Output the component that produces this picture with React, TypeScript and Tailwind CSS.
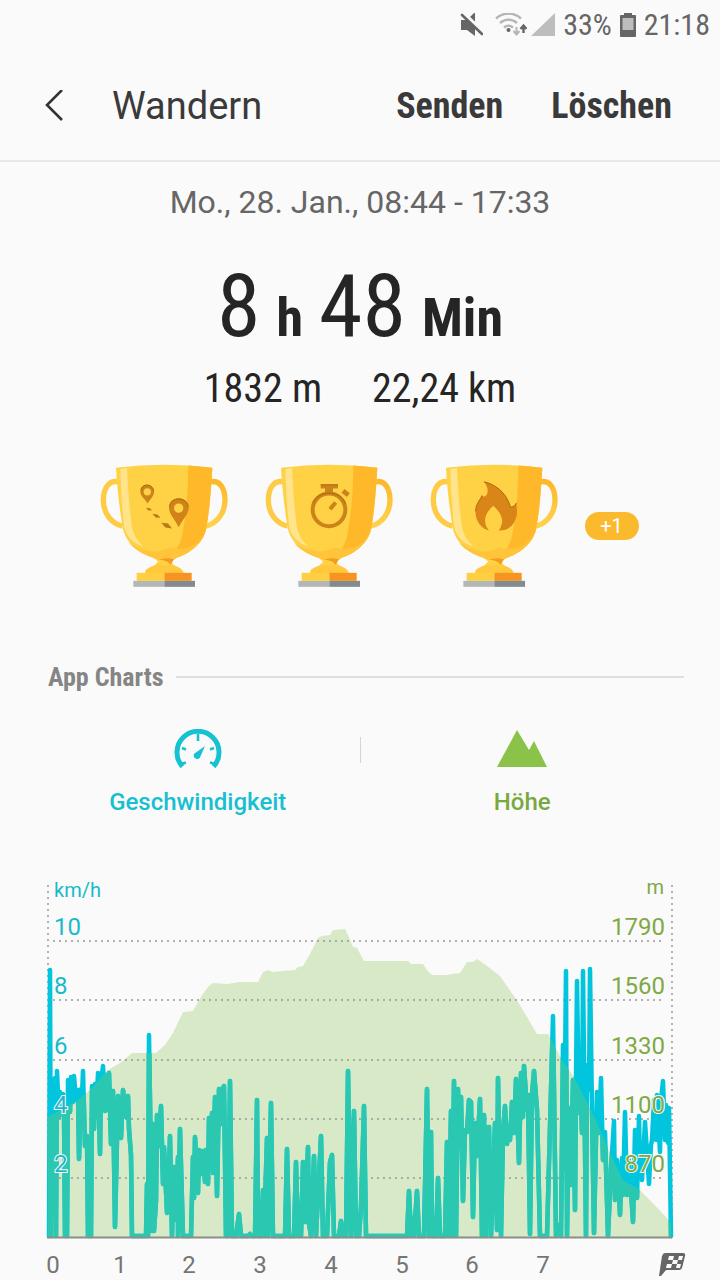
import type { ReactNode } from 'react';

type Point = [number, number];

const CHART_WIDTH = 720;
const CHART_HEIGHT = 410;
const BASELINE = 367;

const elevation: Point[] = [
  [48, 247], [60, 240], [78, 230], [90, 220], [108, 200], [120, 193], [132, 183], [156, 183],
  [165, 175], [173, 163], [183, 142], [193, 141], [202, 125], [209, 116], [213, 113], [227, 114],
  [240, 112], [258, 112], [263, 102], [268, 100], [272, 102], [283, 101], [295, 100], [298, 97],
  [303, 96], [310, 84], [318, 68], [322, 66], [330, 65], [333, 60], [345, 59], [348, 65],
  [353, 77], [357, 78], [364, 91], [408, 91], [411, 94], [423, 94], [427, 100], [432, 105],
  [447, 105], [452, 104], [460, 103], [467, 92], [473, 92], [477, 89], [483, 93], [500, 106],
  [520, 135], [537, 164], [548, 164], [562, 190], [572, 204], [575, 209], [595, 248], [610, 283],
  [623, 310], [640, 320], [667, 348], [671, 353],
];

const speed: Point[] = [
  [49, 366], [50, 100], [51, 366], [52, 210], [53, 232], [55, 208], [56, 366], [57, 201],
  [59, 247], [60, 222], [61, 240], [63, 224], [64, 240], [65, 366], [67, 366], [68, 210], [70, 242],
  [71, 207], [73, 232], [74, 206], [76, 230], [78, 220], [79, 289], [81, 219], [82, 226],
  [83, 201], [85, 276], [87, 266], [88, 366], [91, 366], [92, 216], [94, 259], [95, 214],
  [96, 248], [98, 203], [100, 284], [101, 212], [103, 196], [105, 241], [106, 205], [107, 240],
  [109, 203], [111, 274], [113, 221], [115, 357], [118, 226], [121, 268], [123, 220], [126, 247],
  [128, 226], [129, 259], [131, 285], [132, 366], [146, 366], [147, 314], [148, 366], [149, 165],
  [152, 361], [153, 254], [154, 361], [156, 331], [157, 245], [159, 276], [161, 236], [163, 314],
  [164, 277], [167, 343], [169, 300], [170, 266], [172, 366], [174, 297], [176, 350], [178, 287],
  [178, 366], [180, 259], [183, 366], [191, 366], [193, 287], [194, 328], [195, 267], [198, 323],
  [199, 280], [201, 304], [203, 281], [205, 312], [206, 280], [208, 314], [209, 248], [211, 282],
  [212, 243], [213, 303], [215, 227], [217, 326], [219, 219], [221, 254], [222, 220], [224, 216],
  [226, 366], [228, 366], [230, 211], [232, 366], [236, 366], [239, 344], [241, 366], [248, 366],
  [250, 364], [252, 366], [255, 366], [257, 230], [258, 366], [261, 366], [263, 320], [264, 366],
  [267, 268], [268, 366], [271, 233], [273, 366], [285, 366], [287, 279], [289, 366], [294, 366],
  [296, 292], [298, 366], [300, 345], [301, 366], [303, 292], [305, 352], [308, 277], [309, 354],
  [311, 366], [314, 286], [316, 366], [321, 266], [323, 366], [327, 366], [330, 292], [332, 285],
  [334, 366], [339, 366], [341, 351], [343, 366], [345, 358], [346, 366], [348, 201], [351, 366],
  [354, 241], [356, 366], [359, 366], [361, 337], [364, 236], [366, 366], [407, 366], [409, 321],
  [411, 366], [413, 348], [414, 366], [417, 321], [419, 366], [424, 366], [427, 219], [429, 366],
  [431, 262], [432, 366], [436, 366], [438, 308], [440, 366], [445, 366], [447, 272], [449, 366],
  [451, 241], [452, 366], [454, 211], [456, 366], [458, 219], [459, 260], [461, 227], [463, 331],
  [465, 260], [467, 262], [469, 230], [471, 232], [473, 347], [475, 253], [477, 286], [480, 229],
  [482, 366], [484, 245], [486, 366], [487, 258], [489, 257], [491, 366], [493, 315], [495, 253],
  [497, 360], [498, 208], [501, 366], [503, 262], [505, 236], [507, 274], [508, 258], [510, 270],
  [512, 232], [514, 263], [516, 209], [519, 293], [521, 203], [523, 247], [524, 196], [527, 240],
  [528, 225], [530, 364], [532, 225], [534, 201], [537, 240], [540, 366], [547, 366], [551, 220],
  [553, 146], [556, 366], [559, 355], [561, 366], [563, 175], [564, 300], [566, 101], [567, 366],
  [569, 238], [571, 315], [573, 210], [575, 340], [576, 210], [577, 111], [579, 243], [580, 210],
  [582, 263], [583, 101], [586, 366], [587, 195], [589, 220], [590, 99], [592, 240], [594, 363],
  [597, 222], [599, 263], [601, 208], [603, 290], [605, 262], [608, 366], [611, 300], [614, 251],
  [615, 330], [617, 290], [620, 345], [622, 288], [623, 325], [625, 242], [627, 325], [629, 290],
  [631, 320], [633, 352], [635, 260], [637, 328], [639, 246], [640, 300], [642, 310], [645, 252],
  [649, 314], [651, 275], [652, 270], [654, 230], [656, 270], [657, 225], [659, 265], [660, 282],
  [661, 230], [663, 211], [665, 270], [666, 235], [668, 273], [669, 238], [671, 366],
];

const gridRows = [
  { y: 71, speed: '10', height: '1790' },
  { y: 130, speed: '8', height: '1560' },
  { y: 190, speed: '6', height: '1330' },
  { y: 249, speed: '4', height: '1100' },
  { y: 308, speed: '2', height: '870' },
];

const hours: Point[] = [[53, 0], [120, 1], [189, 2], [260, 3], [331, 4], [402, 5], [472, 6], [543, 7]];

const toPath = (points: Point[]) => 'M' + points.map((p) => p.join(' ')).join('L');

function StatusBar() {
  return (
    <div className="flex h-[50px] items-center justify-end pr-[10px] font-['Roboto_Condensed',Roboto,sans-serif] text-[30px] leading-none text-[#666]">
      <svg className="mr-3 h-6 w-6" viewBox="0 0 24 24">
        <path d="M2 7h6l8-8v24l-8-6H2z" fill="#666" />
        <path d="M1 -3L24 19" stroke="#fafafa" strokeWidth="4" />
        <path d="M3 2L23 21" stroke="#666" strokeWidth="2.6" strokeLinecap="round" />
      </svg>
      <svg className="mr-1 h-6 w-8" viewBox="0 0 32 24" fill="none">
        <path d="M1 5.500C8 -1 19 -1 26 5.500M5 10C10 5.500 17 5.500 22 10M9 14.500C12 12 15 12 18 14.500" stroke="#b5b5b5" strokeWidth="2.400" />
        <circle cx="13.500" cy="17" r="2" fill="#666" />
        <path d="M21.500 14v7M18.500 18l3 3.500 3-3.500" stroke="#b5b5b5" strokeWidth="2" />
        <path d="M28.500 20v-7M25.500 16l3-3.500 3 3.500" stroke="#666" strokeWidth="2.400" />
      </svg>
      <svg className="mr-2 h-6 w-6" viewBox="0 0 24 24">
        <path d="M24 0v23H0z" fill="#bdbdbd" />
      </svg>
      <span>33%</span>
      <svg className="mx-2 h-6 w-4" viewBox="0 0 16 24">
        <path d="M4 0h8v2h3q1 0 1 1v20q0 1-1 1H1q-1 0-1-1V3q0-1 1-1h3z" fill="#666" />
        <path d="M2.500 5h11v12h-11z" fill="#bdbdbd" />
      </svg>
      <span>21:18</span>
    </div>
  );
}

function Trophy({ id, label, children }: { id: string; label: string; children: ReactNode }) {
  return (
    <svg className="h-[125px] w-32" viewBox="28 40 384 374" role="img" aria-label={label}>
      <defs>
        <linearGradient id={id} x1="0" y1="0" x2="0" y2="1">
          <stop offset="0" stopColor="#fdb72b" />
          <stop offset="1" stopColor="#ffd24d" />
        </linearGradient>
      </defs>
      <path d="M84 96C54 90 38 116 38 151C38 190 62 222 96 229" fill="none" stroke="#fecb45" strokeWidth="16" />
      <path d="M358 96C388 90 403 116 403 151C403 190 378 222 345 229" fill="none" stroke={`url(#${id})`} strokeWidth="16" />
      <path d="M76 54Q220 35 365 54C361 120 357 180 347 234C340 278 300 310 258 324L242 334Q243 345 274 360V370H165V360Q197 347 202 334L188 324C145 310 105 280 96 234C87 180 80 120 76 54Z" fill="#ffd145" />
      <path d="M293 47Q330 49 365 54C361 120 357 180 347 234C340 278 300 310 258 324L242 334L240 345Q230 330 200 329C250 320 272 290 278 235C290 170 292 110 293 47Z" fill="#ffb829" />
      <path d="M347 234C340 278 300 310 258 324L240 332Q210 333 188 324C155 313 130 298 115 278C150 304 200 315 236 293C310 309 338 268 347 234Z" fill="#ffc43a" />
      <path d="M205 330Q225 322 250 328L240 345Q228 330 205 330Z" fill="#f39c22" />
      <path d="M89 58L109 54C112 120 117 185 124 233C130 260 143 275 158 291C130 281 108 262 101 234C94 180 91 120 89 58Z" fill="#ffe48c" />
      <path d="M163 369C168 350 190 348 200 346H242C262 348 276 358 280 369Z" fill="#ffc83d" />
      <path d="M138 369H221V393H138Z" fill="#ffcf3f" />
      <path d="M221 369H303V393H221Z" fill="#f7931e" />
      <path d="M128 393H221V411H128Z" fill="#b3b8b6" />
      <path d="M221 393H313V411H221Z" fill="#838b8d" />
      {children}
    </svg>
  );
}

function RouteMark() {
  return (
    <g>
      <path fillRule="evenodd" d="M170 105C156 105 149 115 149 126C149 139 162 147 171 161C180 147 190 139 190 126C190 115 182 105 170 105ZM170 115A11 11 0 1 0 170 137A11 11 0 1 0 170 115Z" fill="#c98518" />
      <path fillRule="evenodd" d="M264 145C246 145 235 158 235 174C235 192 253 209 264 232C276 209 294 192 294 174C294 158 282 145 264 145ZM264 161A14 14 0 1 0 264 189A14 14 0 1 0 264 161Z" fill="#cf8318" />
      <path d="M151 121C153 100 185 100 189 123M237 170C239 141 288 139 293 170" fill="none" stroke="#a96b12" strokeWidth="3" />
      <path d="M166 174L178 175L184 182L172 181ZM185 192L200 194L210 204L195 203ZM212 219L232 221L244 236L224 233Z" fill="#b87a18" />
    </g>
  );
}

function StopwatchMark() {
  return (
    <g fill="none" stroke="#cc841a">
      <circle cx="220" cy="180" r="49" strokeWidth="12" />
      <path d="M195 110H247" strokeWidth="12" />
      <path d="M220 114V130" strokeWidth="24" />
      <path d="M262 123L278 136" strokeWidth="14" />
      <path d="M223 178L240 158" strokeWidth="12" />
      <path d="M195 105H247M172 160C184 122 256 118 269 162" stroke="#a96b12" strokeWidth="3" />
    </g>
  );
}

function FlameMark() {
  return (
    <g>
      <path d="M190 96C220 102 257 125 270 173Q283 171 288 159C287 180 293 190 283 212C275 232 257 243 235 242C248 218 252 200 218 168C188 194 187 220 205 242C181 237 163 212 165 184C167 158 181 147 184 136C190 145 199 139 201 126C202 114 196 105 190 96Z" fill="#d98518" />
      <path d="M190 96C220 102 257 125 270 173Q283 171 288 159M184 137C181 149 165 159 165 185" fill="none" stroke="#a96b12" strokeWidth="3" />
    </g>
  );
}

function ActivityChart() {
  const area = `${toPath(elevation)}L671 ${BASELINE}L48 ${BASELINE}Z`;
  const line = toPath(speed);

  return (
    <svg
      className="mt-[52px] block w-full font-[Roboto,sans-serif]"
      viewBox={`0 0 ${CHART_WIDTH} ${CHART_HEIGHT}`}
      role="img"
      aria-label="Geschwindigkeit, Höhe"
    >
      <defs>
        <clipPath id="below-elevation">
          <path d={area} />
        </clipPath>
      </defs>

      <path d={area} fill="#d7e9c6" />

      {/* grid */}
      <g stroke="#999" strokeWidth="2" strokeLinecap="round" strokeDasharray="0 6">
        {gridRows.map((row) => (
          <path key={row.y} d={`M54 ${row.y}H662`} />
        ))}
        <path d="M48 16V366M672 16V366" />
      </g>

      {/* speed turns teal where it runs in front of the elevation */}
      <g fill="none" strokeWidth="4.5" strokeLinejoin="round" strokeLinecap="round">
        <path d={line} stroke="#00c5dc" />
        <path d={line} stroke="#2bc8b1" clipPath="url(#below-elevation)" />
      </g>
      <path d="M47 367.500H672" stroke="#8a8f8a" strokeWidth="2" />

      <g fontSize="24" stroke="#fafafa" strokeWidth="2" paintOrder="stroke">
        <text x="54" y="27" fontSize="20" fill="#19b9cb">km/h</text>
        <text x="664" y="24" fontSize="20" fill="#7fa945" textAnchor="end">m</text>
        {gridRows.map((row) => (
          <g key={row.y}>
            <text x="54" y={row.y - 6} fill="#19b9cb">{row.speed}</text>
            <text x="665" y={row.y - 6} fill="#7fa945" textAnchor="end">{row.height}</text>
          </g>
        ))}
      </g>

      <g fontSize="24" fill="#757575" textAnchor="middle">
        {hours.map(([x, hour]) => (
          <text key={hour} x={x} y="403">{hour}</text>
        ))}
      </g>

      {/* finish flag */}
      <path d="M665 383H683Q686 383 685 386L682 398Q681 400 679 400H666L661 406H659L662 386Q663 383 665 383Z" fill="#666" />
      <path d="M669 386h5l-1 4h-5zM679 386h4l-1 4h-4zM673 390h5l-1 4h-5zM667 394h5l-1 4h-5zM677 394h4l-1 4h-4z" fill="#fafafa" />
    </svg>
  );
}

export default function App() {
  return (
    <div className="min-h-screen overflow-hidden bg-[#fafafa] font-[Roboto,sans-serif] text-[#252525]">
      <StatusBar />

      <header className="flex h-28 items-center border-b-2 border-[#e8e8e8] pt-0.5 pr-12 pl-11 text-[#3a3a3a]">
        <button aria-label="Zurück" className="mr-12">
          <svg className="block h-8 w-5" viewBox="0 0 20 32" fill="none">
            <path d="M18 0L3 15L18 30" stroke="#333" strokeWidth="2.600" />
          </svg>
        </button>
        <h1 className="text-[38px] leading-none">Wandern</h1>
        <div className="ml-auto flex gap-12 font-['Roboto_Condensed',Roboto,sans-serif] text-[36px] leading-none font-bold">
          <button>Senden</button>
          <button>Löschen</button>
        </div>
      </header>

      <main>
        <p className="mt-5 text-center text-[32px] leading-10 text-[#666]">Mo., 28. Jan., 08:44 - 17:33</p>

        <div className="font-['Roboto_Condensed',Roboto,sans-serif]">
          <p className="mt-9 flex h-24 items-baseline justify-center gap-4 text-[88px] leading-24">
            <span>8</span>
            <span className="text-[54px] font-bold">h</span>
            <span>48</span>
            <span className="text-[54px] font-bold">Min</span>
          </p>
          <p className="mt-[11px] flex justify-center gap-[50px] text-[40px] leading-12">
            <span>1832 m</span>
            <span>22,24 km</span>
          </p>
        </div>

        <div className="mt-[50px] flex items-center justify-center gap-[37px] pl-[18px]">
          <Trophy id="handle-route" label="Strecke"><RouteMark /></Trophy>
          <Trophy id="handle-time" label="Dauer"><StopwatchMark /></Trophy>
          <Trophy id="handle-burn" label="Kalorien"><FlameMark /></Trophy>
          <button className="-ml-2.5 h-7 w-[54px] rounded-full bg-[#fbb92e] text-xl leading-7 text-white">+1</button>
        </div>

        <div className="mt-[73px] flex items-center gap-3 pr-9 pl-12">
          <h2 className="font-['Roboto_Condensed',Roboto,sans-serif] text-[26px] leading-8 font-bold text-[#858585]">App Charts</h2>
          <div className="h-[2px] flex-1 bg-[#dedede]" />
        </div>

        <div className="mt-9 flex px-9 text-[24px] leading-8 font-medium">
          <div className="flex flex-1 flex-col items-center gap-[17px] text-[#17bfd0]">
            <svg className="h-10 w-12" viewBox="0 0 48 40" fill="none">
              <path d="M8.500 37.500A21 21 0 1 1 39.500 37.500" stroke="#14c2d2" strokeWidth="5" />
              <path d="M24 5V12M8 19l4 1.500M40 19l-4 1.500M7 35l5-1.500M41 35l-5-1.500" stroke="#14c2d2" strokeWidth="2.600" />
              <path d="M31 17L20.500 24.500A3.400 3.400 0 1 0 26 28.500Z" fill="#14c2d2" />
            </svg>
            <span>Geschwindigkeit</span>
          </div>
          <div className="mt-2 h-[26px] w-px bg-[#d5d5d5]" />
          <div className="flex flex-1 flex-col items-center gap-[17px] text-[#79a93e]">
            <svg className="h-10 w-[50px]" viewBox="0 0 50 40">
              <path d="M0 38L20 1L32 21L37 12L50 38Z" fill="#8bc34a" />
            </svg>
            <span>Höhe</span>
          </div>
        </div>

        <ActivityChart />
      </main>
    </div>
  );
}
